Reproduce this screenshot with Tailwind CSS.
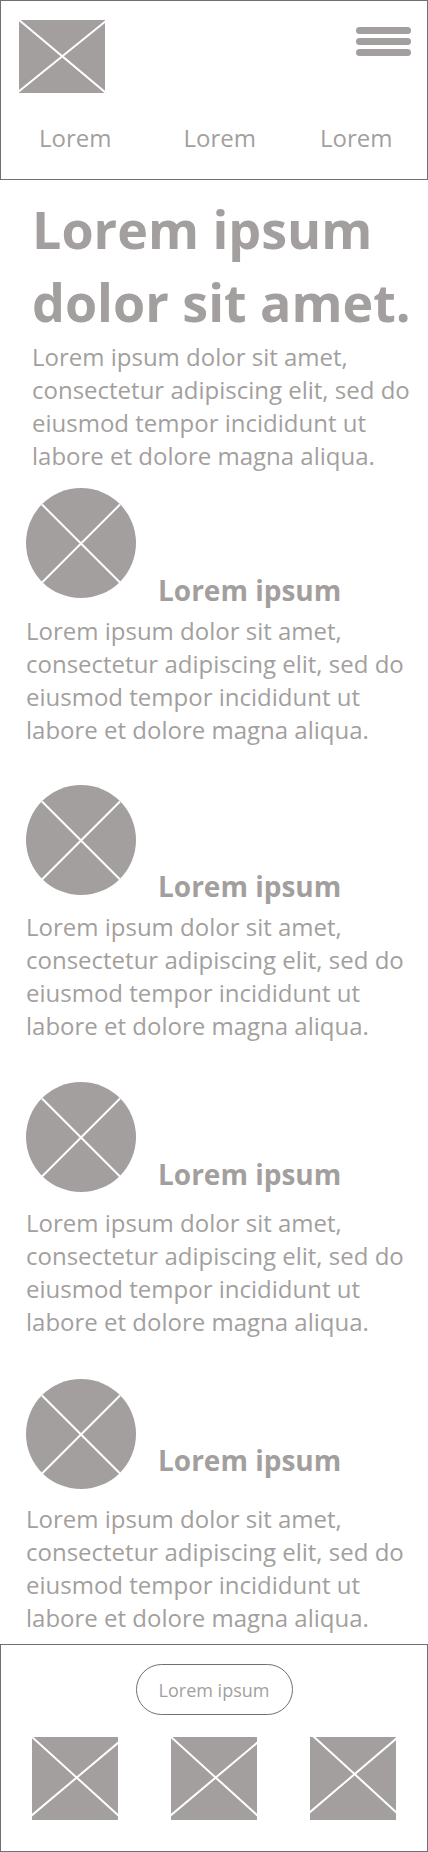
<!DOCTYPE html>
<html lang="en">
<head>
<meta charset="utf-8">
<meta name="viewport" content="width=device-width, initial-scale=1">
<title>Lorem ipsum</title>
<script src="https://cdn.jsdelivr.net/npm/@tailwindcss/browser@4"></script>
</head>
<body class="bg-white font-['Open_Sans','Noto_Sans',sans-serif] text-2xl/[33px] text-[#a39f9e]">
<svg class="hidden" aria-hidden="true">
  <symbol id="avatar" viewBox="0 0 110 110">
    <circle cx="55" cy="55" r="55" fill="#a39f9e"/>
    <path d="M16 16.500L94 94.500M94 16.500L16 94.500" stroke="#fff" stroke-width="2"/>
  </symbol>
</svg>

<header class="border border-[#707070] pt-[19px] pb-[25px]">
  <div class="flex items-start justify-between pr-4 pl-[18px]">
    <a href="#" aria-label="Home">
      <svg class="block h-[73px] w-[86px]" viewBox="0 0 86 73" aria-hidden="true">
        <path fill="#a39f9e" d="M0 0h86v73H0z"/>
        <path d="M0 0L87 73M-1 72L87 1" stroke="#fff" stroke-width="2"/>
      </svg>
    </a>
    <button type="button" aria-label="Menu" class="mt-[7px] flex flex-col gap-1">
      <span class="block h-[7px] w-[55px] rounded-full bg-[#a39f9e]"></span>
      <span class="block h-[7px] w-[55px] rounded-full bg-[#a39f9e]"></span>
      <span class="block h-[7px] w-[55px] rounded-full bg-[#a39f9e]"></span>
    </button>
  </div>
  <nav class="mt-7 flex pl-[38px]">
    <a href="#">Lorem</a>
    <a href="#" class="ml-[72px]">Lorem</a>
    <a href="#" class="ml-16">Lorem</a>
  </nav>
</header>

<main>
  <section class="pt-3 pr-2 pl-8">
    <h1 class="text-[52px]/[73px] font-bold">Lorem ipsum<br>dolor sit amet.</h1>
    <p class="mt-0.5">Lorem ipsum dolor sit amet,<br>consectetur adipiscing elit, sed do<br>eiusmod tempor incididunt ut<br>labore et dolore magna aliqua.</p>
  </section>

  <div class="mt-4 pr-4 pl-[26px]">
    <article class="min-h-[297px]">
      <div class="flex h-[126px] items-start gap-[22px]">
        <svg class="size-[110px] shrink-0" aria-hidden="true"><use href="#avatar"/></svg>
        <h2 class="mt-[82px] text-[28px]/10 font-bold">Lorem ipsum</h2>
      </div>
      <p>Lorem ipsum dolor sit amet,<br>consectetur adipiscing elit, sed do<br>eiusmod tempor incididunt ut<br>labore et dolore magna aliqua.</p>
    </article>
    <article class="min-h-[297px]">
      <div class="flex h-[125px] items-start gap-[22px]">
        <svg class="size-[110px] shrink-0" aria-hidden="true"><use href="#avatar"/></svg>
        <h2 class="mt-[81px] text-[28px]/10 font-bold">Lorem ipsum</h2>
      </div>
      <p>Lorem ipsum dolor sit amet,<br>consectetur adipiscing elit, sed do<br>eiusmod tempor incididunt ut<br>labore et dolore magna aliqua.</p>
    </article>
    <article class="min-h-[297px]">
      <div class="flex h-[124px] items-start gap-[22px]">
        <svg class="size-[110px] shrink-0" aria-hidden="true"><use href="#avatar"/></svg>
        <h2 class="mt-[72px] text-[28px]/10 font-bold">Lorem ipsum</h2>
      </div>
      <p>Lorem ipsum dolor sit amet,<br>consectetur adipiscing elit, sed do<br>eiusmod tempor incididunt ut<br>labore et dolore magna aliqua.</p>
    </article>
    <article>
      <div class="flex h-[123px] items-start gap-[22px]">
        <svg class="size-[110px] shrink-0" aria-hidden="true"><use href="#avatar"/></svg>
        <h2 class="mt-[61px] text-[28px]/10 font-bold">Lorem ipsum</h2>
      </div>
      <p>Lorem ipsum dolor sit amet,<br>consectetur adipiscing elit, sed do<br>eiusmod tempor incididunt ut<br>labore et dolore magna aliqua.</p>
    </article>
  </div>
</main>

<footer class="mt-2.5 border border-[#707070] px-[31px] pt-[19px] pb-[31px]">
  <button type="button" class="mx-auto block h-[51px] w-[157px] rounded-full border border-[#707070] text-lg">Lorem ipsum</button>
  <div class="mt-[22px] flex justify-between">
    <svg class="h-[83px] w-[86px]" viewBox="0 0 86 83" aria-hidden="true">
      <path fill="#a39f9e" d="M0 0h86v83H0z"/>
      <path d="M0 0L87 79M-1 79L87 5" stroke="#fff" stroke-width="2"/>
    </svg>
    <svg class="h-[83px] w-[86px]" viewBox="0 0 86 83" aria-hidden="true">
      <path fill="#a39f9e" d="M0 0h86v83H0z"/>
      <path d="M0 0L87 79M-1 79L87 5" stroke="#fff" stroke-width="2"/>
    </svg>
    <svg class="h-[83px] w-[86px]" viewBox="0 0 86 83" aria-hidden="true">
      <path fill="#a39f9e" d="M0 0h86v83H0z"/>
      <path d="M3 -1L87 76M-1 76L87 1" stroke="#fff" stroke-width="2"/>
    </svg>
  </div>
</footer>
</body>
</html>
